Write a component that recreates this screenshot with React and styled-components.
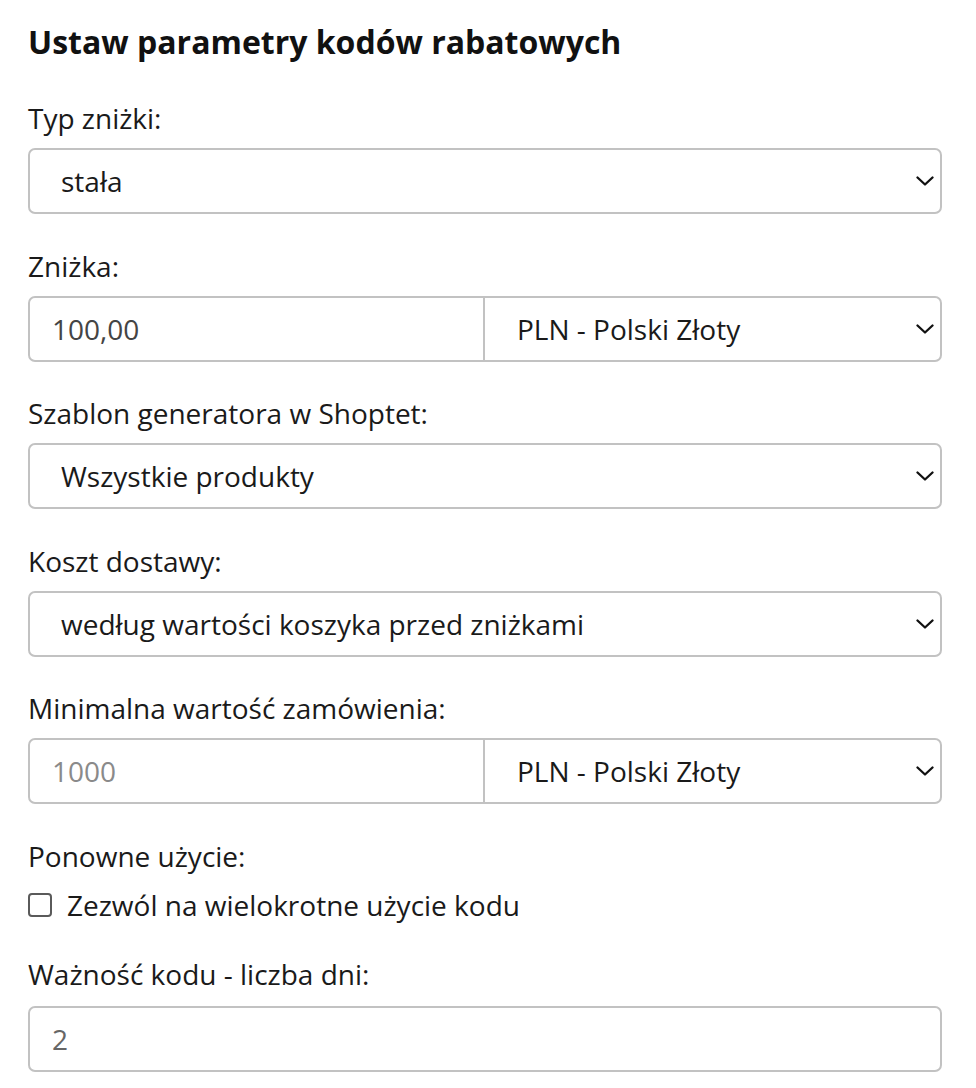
import React from "react";
import styled, { createGlobalStyle } from "styled-components";

const Global = createGlobalStyle`
  html, body { margin: 0; padding: 0; background: #fff; }
  body { font-family: "Open Sans", "Noto Sans", sans-serif; color: #1a1a1a; }
  * { box-sizing: border-box; }
`;

const Page = styled.div`
  width: 976px;
  padding: 21px 34px 0 28px;
  display: flex;
  flex-direction: column;
`;

const Title = styled.h1`
  margin: 0 0 37px;
  font-size: 32px;
  line-height: 42px;
  font-weight: 700;
  color: #111;
`;

const Group = styled.div`
  display: flex;
  flex-direction: column;
  margin-bottom: ${(p) => p.$mb ?? 33.5}px;
`;

const Label = styled.label`
  font-size: 28px;
  line-height: 36px;
  color: #1a1a1a;
  margin-bottom: ${(p) => p.$mb ?? 12}px;
`;

const Row = styled.div`
  display: grid;
  grid-template-columns: 1fr 1fr;
`;

const SelectWrap = styled.div`
  position: relative;
  min-width: 0;
`;

const Select = styled.select`
  appearance: none;
  -webkit-appearance: none;
  width: 100%;
  height: 66px;
  margin: 0;
  padding: 0 50px 0 31px;
  font-family: inherit;
  font-size: 28px;
  color: #1a1a1a;
  background: #fff;
  border: 2px solid #c2c2c2;
  border-radius: ${(p) => (p.$joined ? "0 7px 7px 0" : "7px")};
  border-left-width: ${(p) => (p.$joined ? "0" : "2px")};
  padding-left: ${(p) => (p.$joined ? "32px" : "31px")};
  outline: none;
`;

const Chevron = styled.svg`
  position: absolute;
  right: 8px;
  top: 50%;
  width: 18px;
  height: 10px;
  transform: translateY(-50%);
  pointer-events: none;
`;

const Input = styled.input`
  display: block;
  width: 100%;
  min-width: 0;
  height: 66px;
  margin: 0;
  padding: 0 22px;
  font-family: inherit;
  font-size: 28px;
  color: ${(p) => p.$tone || "#444"};
  background: #fff;
  border: 2px solid #c2c2c2;
  border-radius: ${(p) => (p.$joined ? "7px 0 0 7px" : "7px")};
  outline: none;
  &::placeholder { color: #8a8a8a; }
`;

const CheckRow = styled.label`
  display: flex;
  align-items: center;
  gap: 15px;
  font-size: 28px;
  line-height: 36px;
  color: #1a1a1a;
`;

const Box = styled.span`
  width: 24px;
  height: 24px;
  border: 2px solid #5a5a5a;
  border-radius: 4px;
  background: #fff;
  flex: none;
`;

const Arrow = () => (
  <Chevron viewBox="0 0 18 10">
    <path d="M1.5 1.5 L9 8.5 L16.5 1.5" fill="none" stroke="#111" strokeWidth="2.3" strokeLinecap="round" strokeLinejoin="round" />
  </Chevron>
);

const Dropdown = ({ value, joined }) => (
  <SelectWrap>
    <Select $joined={joined} defaultValue={value}>
      <option value={value}>{value}</option>
    </Select>
    <Arrow />
  </SelectWrap>
);

export default function App() {
  return (
    <>
      <Global />
      <Page>
        <Title>Ustaw parametry kodów rabatowych</Title>

        <Group>
          <Label>Typ zniżki:</Label>
          <Dropdown value="stała" />
        </Group>

        <Group>
          <Label>Zniżka:</Label>
          <Row>
            <Input $joined defaultValue="100,00" />
            <Dropdown joined value="PLN - Polski Złoty" />
          </Row>
        </Group>

        <Group>
          <Label>Szablon generatora w Shoptet:</Label>
          <Dropdown value="Wszystkie produkty" />
        </Group>

        <Group>
          <Label>Koszt dostawy:</Label>
          <Dropdown value="według wartości koszyka przed zniżkami" />
        </Group>

        <Group>
          <Label>Minimalna wartość zamówienia:</Label>
          <Row>
            <Input $joined placeholder="1000" />
            <Dropdown joined value="PLN - Polski Złoty" />
          </Row>
        </Group>

        <Group $mb={33}>
          <Label $mb={13}>Ponowne użycie:</Label>
          <CheckRow>
            <Box />
            Zezwól na wielokrotne użycie kodu
          </CheckRow>
        </Group>

        <Group $mb={0}>
          <Label $mb={14}>Ważność kodu - liczba dni:</Label>
          <Input $tone="#666" defaultValue="2" />
        </Group>
      </Page>
    </>
  );
}
